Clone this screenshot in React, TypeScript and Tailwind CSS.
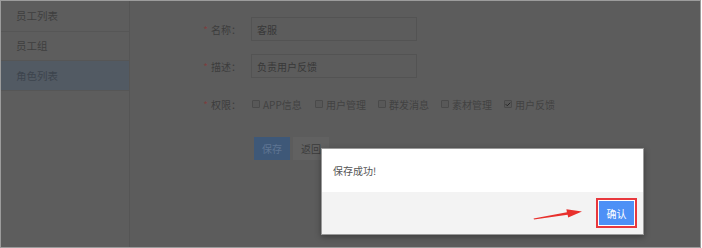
import { Check } from "lucide-react";

const FONT = "font-['Microsoft_YaHei','Noto_Sans_CJK_SC',sans-serif]";

const MENU = [
  { label: "员工列表", active: false, h: "h-[31px]" },
  { label: "员工组", active: false, h: "h-[29px]" },
  { label: "角色列表", active: true, h: "h-[30px]" },
];

const PERMS = [
  { label: "APP信息", checked: false },
  { label: "用户管理", checked: false },
  { label: "群发消息", checked: false },
  { label: "素材管理", checked: false },
  { label: "用户反馈", checked: true },
];

function FieldLabel({ text }: { text: string }) {
  return (
    <div className="flex w-[121px] shrink-0 items-center justify-end pr-[10px] text-[10px] text-[#3c3c3c]">
      <span className="mr-[3px] text-[#7c3f3f]">*</span>
      {text}：
    </div>
  );
}

function RedArrow() {
  return (
    <svg
      className="absolute left-[530px] top-[200px]"
      width="56"
      height="24"
      viewBox="0 0 56 24"
      aria-hidden
    >
      <polygon
        points="3,18.4 36.6,13.8 37.2,16.6 51,10.4 35.4,8.2 35.9,11.2 2.6,17.6"
        fill="#e8302c"
      />
    </svg>
  );
}

export default function App() {
  return (
    <div
      className={cn(
        FONT,
        "relative flex h-[248px] w-[701px] overflow-hidden border border-[#9c9c9c] bg-[#5c5c5c]"
      )}
    >
      {/* dimmed page underneath the dialog */}
      <aside className="flex w-[129px] shrink-0 flex-col border-r border-[#555555] bg-[#5d5d5d]">
        {MENU.map((item) => (
          <div
            key={item.label}
            className={cn(
              "flex items-center border-b border-[#565656] pl-[15px] text-[10.5px]",
              item.h,
              item.active ? "bg-[#525a63] text-[#3d444d]" : "text-[#3f3f3f]"
            )}
          >
            {item.label}
          </div>
        ))}
      </aside>

      <main className="flex flex-1 flex-col pt-[16px]">
        <div className="flex h-[24px] items-center">
          <FieldLabel text="名称" />
          <div className="flex h-[24px] w-[166px] items-center border border-[#535353] pl-[5px] text-[10px] text-[#383838]">
            客服
          </div>
        </div>
        <div className="mt-[13px] flex h-[24px] items-center">
          <FieldLabel text="描述" />
          <div className="flex h-[24px] w-[166px] items-center border border-[#535353] pl-[5px] text-[10px] text-[#383838]">
            负责用户反馈
          </div>
        </div>
        <div className="mt-[16px] flex h-[20px] items-center">
          <FieldLabel text="权限" />
          <div className="flex items-center gap-[12px] pl-[1px]">
            {PERMS.map((p) => (
              <label key={p.label} className="flex items-center gap-[3px] text-[10px] text-[#424242]">
                <span className="flex size-[8px] items-center justify-center rounded-[1px] border border-[#4a4a4a] bg-[#585858]">
                  {p.checked && <Check className="size-[7px] text-[#262626]" strokeWidth={4} />}
                </span>
                <span className="w-[40px] whitespace-nowrap">{p.label}</span>
              </label>
            ))}
          </div>
        </div>
        <div className="mt-[23px] flex items-center gap-[3px] pl-[124px]">
          <button className="h-[23px] w-[36px] bg-[#3e5878] text-[10px] text-[#5e7593]">保存</button>
          <button className="h-[23px] w-[36px] bg-[#616161] text-[10px] text-[#3c3c3c]">返回</button>
        </div>
      </main>

      {/* success dialog */}
      <div className="absolute left-[320px] top-[147px] flex h-[87px] w-[323px] flex-col border border-[#9a9a9a] bg-white shadow-[0_2px_6px_rgb(0_0_0/0.35)]">
        <div className="flex h-[43px] items-center pl-[11px] text-[10px] text-[#555555]">保存成功!</div>
        <div className="flex flex-1 items-center justify-end bg-[#f3f3f3] pr-[6px]">
          <div className="border-2 border-[#e8383d] bg-white p-px">
            <button className="flex h-[24px] w-[35px] items-center justify-center bg-[#4d90f6] text-[10px] text-white">
              确认
            </button>
          </div>
        </div>
      </div>

      <RedArrow />
    </div>
  );
}

function cn(...parts: (string | false | undefined)[]) {
  return parts.filter(Boolean).join(" ");
}
